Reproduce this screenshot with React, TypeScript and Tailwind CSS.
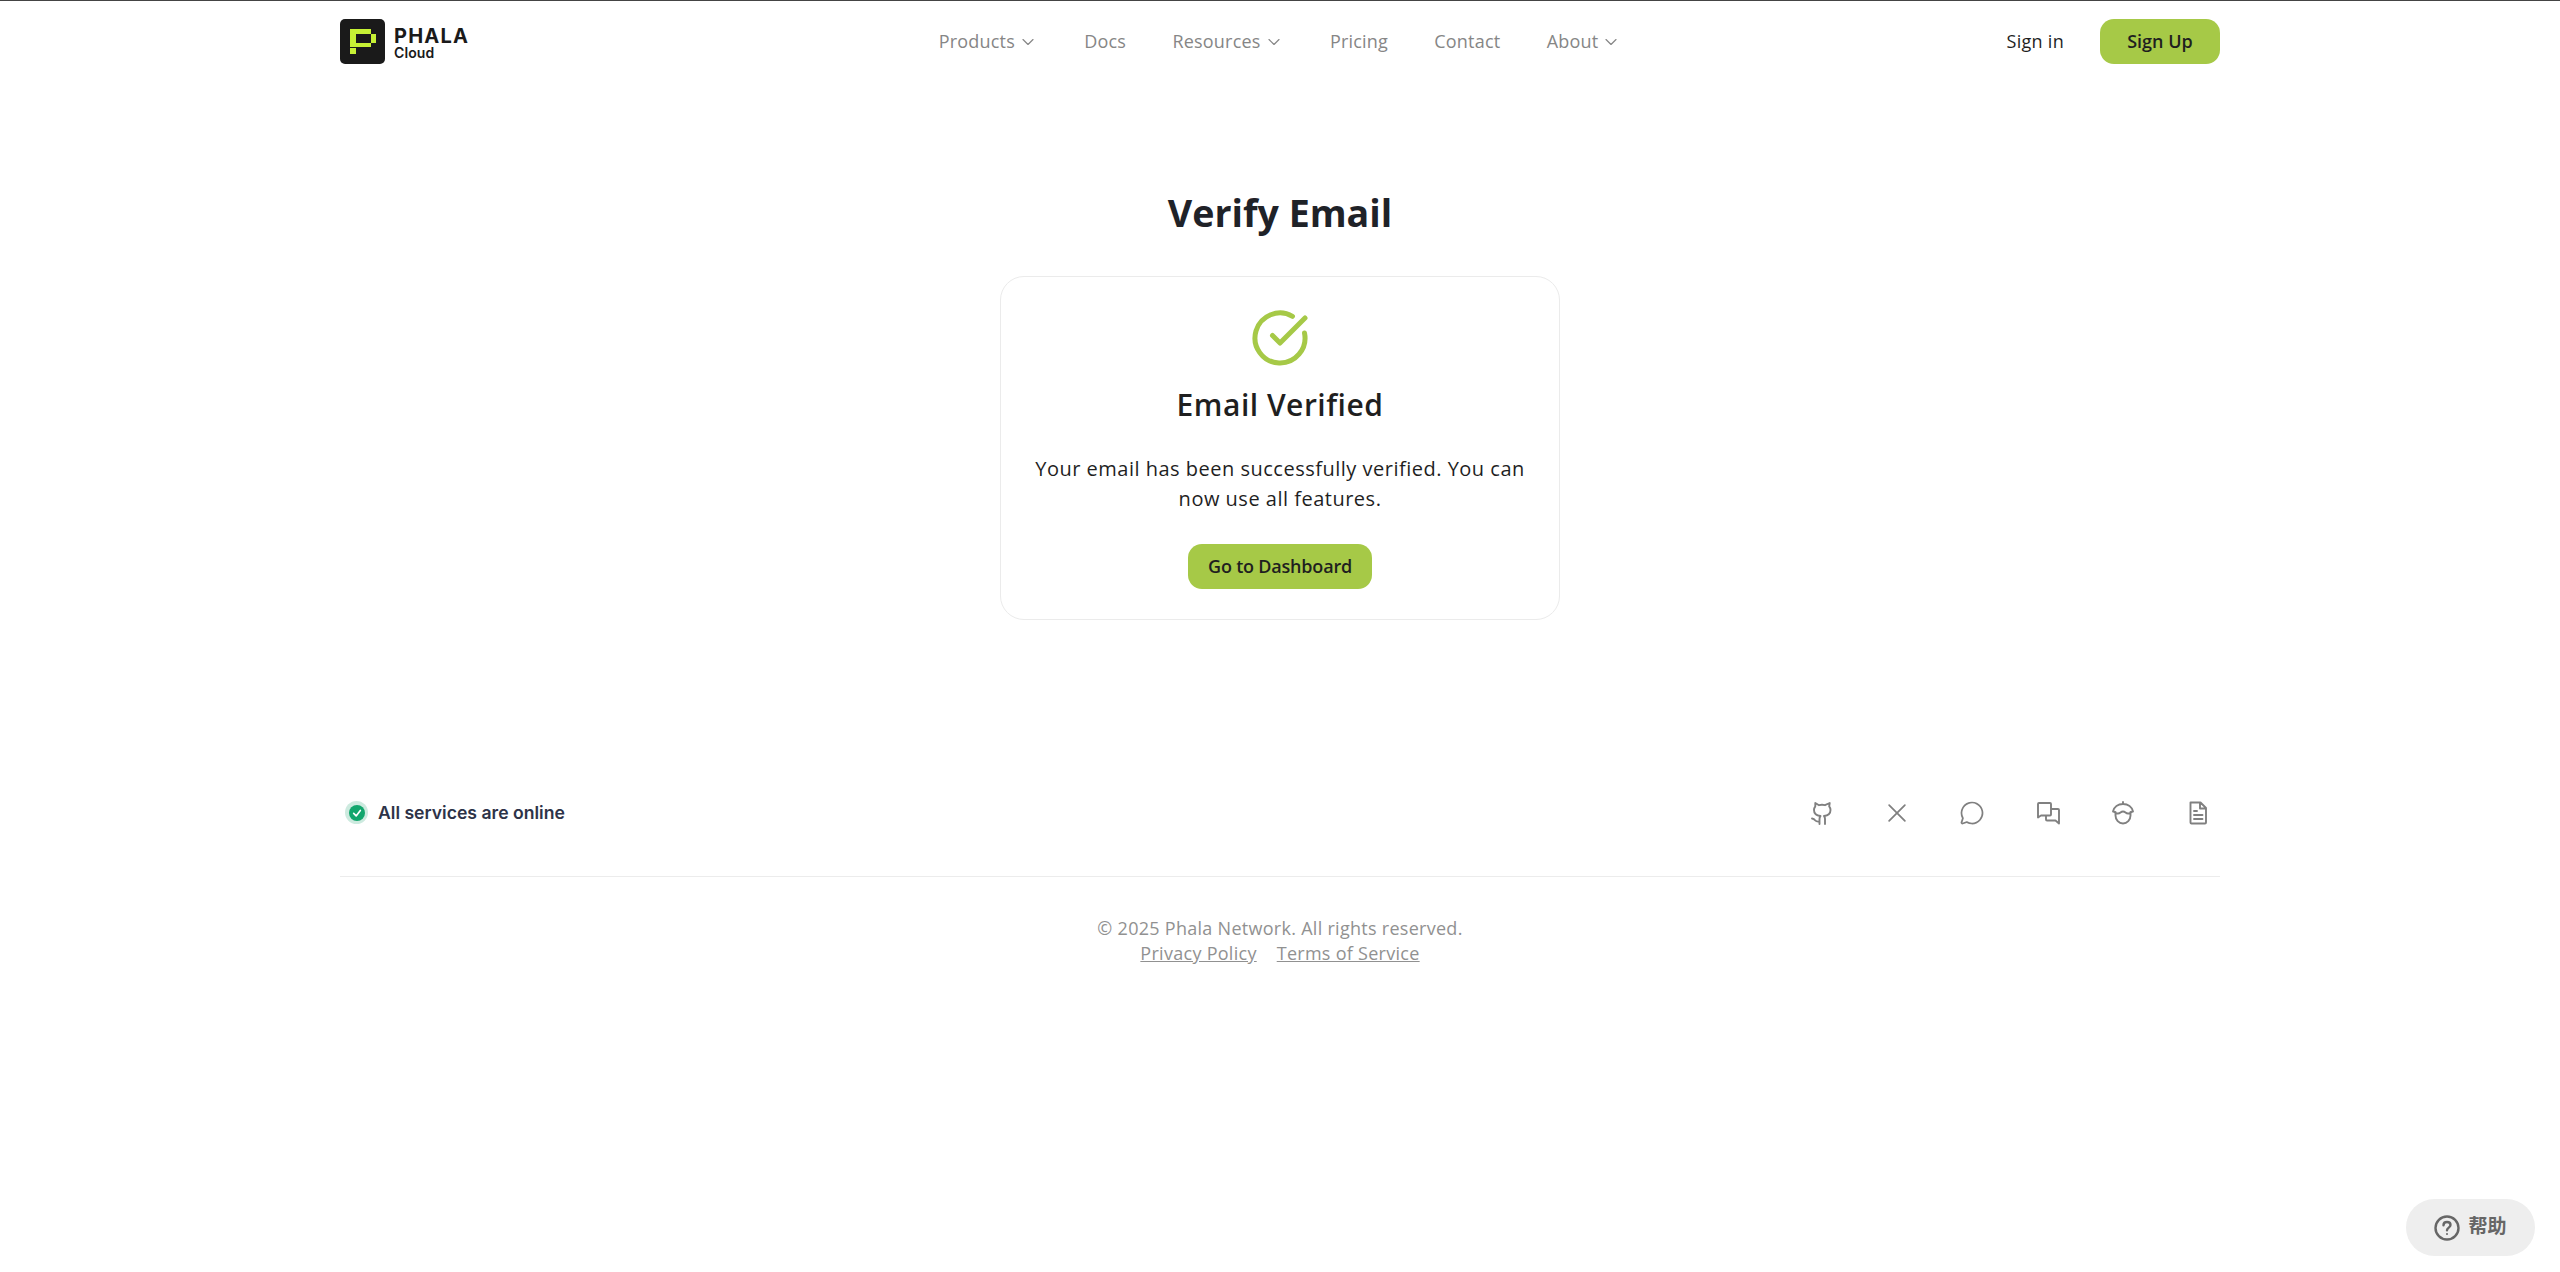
import { ChevronDown, CircleCheckBig } from 'lucide-react';
import { PiChatCircle, PiX } from 'react-icons/pi';

const navItems = [
    { label: 'Products', menu: true },
    { label: 'Docs', menu: false },
    { label: 'Resources', menu: true },
    { label: 'Pricing', menu: false },
    { label: 'Contact', menu: false },
    { label: 'About', menu: true },
];

function DrawnIcon({ d }: { d: string }) {
    return (
        <svg width="24" height="24" viewBox="0 0 24 24" fill="none" stroke="currentColor" strokeWidth="1.9" strokeLinecap="round" strokeLinejoin="round">
            <path d={d} />
        </svg>
    );
}

// github, chats, acorn and file are hand drawn, the packages don't have the same shapes
const githubPath = 'M9.5 23v-5c0-1.5.3-2.2 1-3-3.5-.4-6.5-2-6.5-6 0-1.5.5-2.7 1.3-3.7L5.3 2l3.7 2.2c2-.5 4-.5 6 0L19.7 2l-.5 3.3c.8 1 1.3 2.2 1.3 3.7 0 4-3 5.6-6.5 6 .7.8 1 1.5 1 3v5M2 17.5c1.5.3 2.5 1 3.3 2s2 1.3 4.2 1';
const chatsPath = 'M2 16.5V3a1 1 0 0 1 1-1h11a1 1 0 0 1 1 1v10.5a1 1 0 0 1-1 1H5zM15 8h7a1 1 0 0 1 1 1v13.5l-3.5-3H11a1 1 0 0 1-1-1V15';
const acornPath = 'M12 1v2M2 10.5C3 6 7 3 12 3s9 3 10 7.5c-2 0-2.5 2-5 2s-2.5-2-5-2-2.5 2-5 2-3-2-5-2zM4.5 11v3.5a7.5 8 0 0 0 15 0V11';
const filePath = 'M4.5 1.5h10l5.5 5.5v14.5a1 1 0 0 1-1 1H5.5a1 1 0 0 1-1-1zM14 1.5v6h6M8 10h3M8 14h8.5M8 18h8.5';

function Logo() {
    return (
        <div className="flex items-center gap-[9px]">
            <svg width="45" height="45" viewBox="0 0 45 45">
                <rect width="45" height="45" rx="5" fill="#1a1a1a" />
                <g fill="#c6f135">
                    <rect x="10" y="10" width="21" height="5" />
                    <rect x="31" y="15" width="5" height="9" />
                    <rect x="10" y="15" width="6" height="13" />
                    <rect x="16" y="24" width="15" height="4" />
                    <rect x="10" y="29" width="6" height="6" />
                </g>
            </svg>
            <div className="flex flex-col font-['Inter',sans-serif] text-[#1a1a1a] mt-[1px]">
                <span className="text-[20px] leading-[20px] font-bold tracking-[1.2px]">PHALA</span>
                <span className="text-[14px] leading-[13px] font-semibold tracking-[0.1px]">Cloud</span>
            </div>
        </div>
    );
}

export default function App() {
    return (
        <div className="relative min-h-[1272px] bg-white font-['Open_Sans',sans-serif] text-[#1f1f1f] border-t border-[#444444]">
            {/* Header */}
            <header className="w-[1880px] mx-auto h-[81px] pt-[18px] flex justify-between items-start">
                <div className="w-[400px]">
                    <Logo />
                </div>
                <nav className="flex items-center gap-[46.3px] h-[45px] text-[18px] font-medium text-[#868686] tracking-[0.2px]">
                    {navItems.map((item) => (
                        <a key={item.label} className="flex items-center gap-[3px]">
                            {item.label}
                            {item.menu && <ChevronDown className="w-5 h-5" strokeWidth={1.4} />}
                        </a>
                    ))}
                </nav>
                <div className="w-[400px] flex justify-end items-center gap-[36px] h-[45px] text-[18px] tracking-[0.27px]">
                    <a>Sign in</a>
                    <button className="w-[120px] h-[45px] rounded-[14px] bg-[#a6c947] font-semibold tracking-normal">Sign Up</button>
                </div>
            </header>

            {/* Main */}
            <main className="flex flex-col items-center pt-[106px]">
                <h1 className="text-[37.6px] leading-[50px] font-bold text-[#1f2228]">Verify Email</h1>
                <div className="mt-[38px] w-[560px] h-[344px] rounded-[24px] border border-[#ebebeb] flex flex-col items-center pt-[31px]">
                    <CircleCheckBig className="w-[60px] h-[60px] text-[#a6c947]" strokeWidth={2} />
                    <h2 className="mt-[15px] text-[30px] leading-[44px] font-semibold tracking-[0.5px]">Email Verified</h2>
                    <p className="mt-[27px] w-[500px] text-center text-[20px] leading-[30px] tracking-[0.5px]">
                        Your email has been successfully verified. You can now use all features.
                    </p>
                    <button className="mt-[30px] w-[184px] h-[45px] rounded-[14px] bg-[#a6c947] text-[18px] font-semibold tracking-[-0.2px]">
                        Go to Dashboard
                    </button>
                </div>
            </main>

            {/* Footer */}
            <footer className="w-[1880px] mx-auto mt-[171px]">
                <div className="flex items-center justify-between pb-[41px] border-b border-[#ececec]">
                    <div className="flex items-center gap-[10px] pl-[5px] font-['Inter',sans-serif] text-[17.6px] font-semibold text-[#2d3348]">
                        <span className="w-[23px] h-[23px] rounded-full bg-[#cdeadf] flex items-center justify-center">
                            <span className="w-[16px] h-[16px] rounded-full bg-[#12a66d] flex items-center justify-center">
                                <svg width="10" height="10" viewBox="0 0 12 12" fill="none" stroke="#fff" strokeWidth="2" strokeLinecap="round" strokeLinejoin="round">
                                    <path d="M2 6.5 5 9.5 10 3" />
                                </svg>
                            </span>
                        </span>
                        All services are online
                    </div>
                    <div className="flex items-center gap-[31.2px] text-[#808080]">
                        <a className="w-11 h-11 flex items-center justify-center"><DrawnIcon d={githubPath} /></a>
                        <a className="w-11 h-11 flex items-center justify-center"><PiX className="w-7 h-7" /></a>
                        <a className="w-11 h-11 flex items-center justify-center"><PiChatCircle className="w-7 h-7" /></a>
                        <a className="w-11 h-11 flex items-center justify-center"><DrawnIcon d={chatsPath} /></a>
                        <a className="w-11 h-11 flex items-center justify-center"><DrawnIcon d={acornPath} /></a>
                        <a className="w-11 h-11 flex items-center justify-center"><DrawnIcon d={filePath} /></a>
                    </div>
                </div>
                <div className="mt-[39px] flex flex-col items-center text-[18px] leading-[25px] text-[#919191] tracking-[0.28px]">
                    <p>© 2025 Phala Network. All rights reserved.</p>
                    <p className="flex gap-[20px]">
                        <a className="underline">Privacy Policy</a>
                        <a className="underline">Terms of Service</a>
                    </p>
                </div>
            </footer>

            {/* Help button */}
            <button className="fixed right-[25px] bottom-[16px] w-[129px] h-[57px] rounded-full bg-[#eeeeee] flex items-center justify-center gap-[8px] text-[#666666] text-[19px] font-bold font-['Roboto','Noto_Sans_CJK_SC',sans-serif]">
                <svg width="26" height="26" viewBox="0 0 26 26" fill="none" stroke="#666666" strokeWidth="2.4">
                    <circle cx="13" cy="13" r="11.5" />
                    <path d="M9.5 10.2c0-2 1.6-3.2 3.5-3.2s3.5 1.2 3.5 3c0 2.6-3.5 2.6-3.5 5.2" strokeLinecap="round" />
                    <circle cx="13" cy="19" r="0.6" fill="#666666" strokeWidth="1" />
                </svg>
                帮助
            </button>
        </div>
    );
}
